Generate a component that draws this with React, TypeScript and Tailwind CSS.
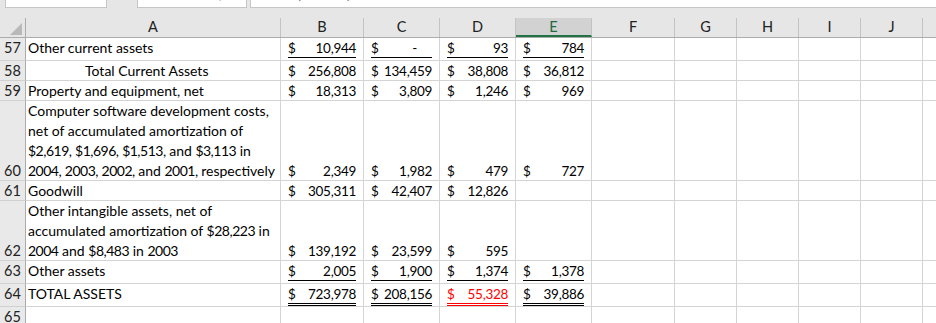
type Line = 'none' | 'single' | 'double'

type Row = {
  n: number
  h: string
  pt: string
  label: string[]
  labelPad?: string
  vals: string[]
  line: Line
  redCol?: number
}

const cols = [
  { l: 'A', w: 'w-[255px]' },
  { l: 'B', w: 'w-[83px]' },
  { l: 'C', w: 'w-[76px]' },
  { l: 'D', w: 'w-[76px]' },
  { l: 'E', w: 'w-[76px]' },
  { l: 'F', w: 'w-[83px]' },
  { l: 'G', w: 'w-[62px]' },
  { l: 'H', w: 'w-[62px]' },
  { l: 'I', w: 'w-[62px]' },
  { l: 'J', w: 'w-[62px]' },
]

const rows: Row[] = [
  { n: 57, h: 'h-[23px]', pt: '', label: ['Other current assets'], vals: ['10,944', '-', '93', '784'], line: 'single' },
  { n: 58, h: 'h-[20px]', pt: '', label: ['Total Current Assets'], labelPad: 'pl-[59px]', vals: ['256,808', '134,459', '38,808', '36,812'], line: 'none' },
  { n: 59, h: 'h-[20px]', pt: '', label: ['Property and equipment, net'], vals: ['18,313', '3,809', '1,246', '969'], line: 'none' },
  {
    n: 60,
    h: 'h-[80px]',
    pt: 'pt-[60px]',
    label: [
      'Computer software development costs,',
      'net of accumulated amortization of',
      '$2,619, $1,696, $1,513, and $3,113 in',
      '2004, 2003, 2002, and 2001, respectively',
    ],
    vals: ['2,349', '1,982', '479', '727'],
    line: 'none',
  },
  { n: 61, h: 'h-[20px]', pt: '', label: ['Goodwill'], vals: ['305,311', '42,407', '12,826', ''], line: 'none' },
  {
    n: 62,
    h: 'h-[60px]',
    pt: 'pt-[40px]',
    label: ['Other intangible assets, net of', 'accumulated amortization of $28,223 in', '2004 and $8,483 in 2003'],
    vals: ['139,192', '23,599', '595', ''],
    line: 'none',
  },
  { n: 63, h: 'h-[23px]', pt: '', label: ['Other assets'], vals: ['2,005', '1,900', '1,374', '1,378'], line: 'single' },
  { n: 64, h: 'h-[23px]', pt: '', label: ['TOTAL ASSETS'], vals: ['723,978', '208,156', '55,328', '39,886'], line: 'double', redCol: 2 },
]

// Calibri has narrow figures; squeeze digit runs so wrapped lines keep their width
function Label({ text }: { text: string }) {
  const parts = text.split(/([$0-9,]+)/)
  return (
    <>
      {parts.map((p, i) =>
        /[0-9]/.test(p) ? (
          <span key={i} className="tracking-[-0.5px]">
            {p}
          </span>
        ) : (
          <span key={i}>{p}</span>
        ),
      )}
    </>
  )
}

function Money({ v, w, pt, line, red }: { v: string; w: string; pt: string; line: Line; red: boolean }) {
  const bar = red ? 'bg-[#ff0000]' : 'bg-black'
  return (
    <div className={`${w} ${pt} shrink-0 border-r border-b border-[#d4d4d4] px-[7px] ${red ? 'text-[#ff0000]' : 'text-black'}`}>
      {v && (
        <>
          <div className="flex h-[19px] justify-between text-[13.5px] leading-[20px] tracking-[-0.3px]">
            <span>$</span>
            <span className={v === '-' ? 'pr-[15px]' : ''}>{v}</span>
          </div>
          {line !== 'none' && <div className={`h-px ${bar}`} />}
          {line === 'double' && <div className={`mt-px h-px ${bar}`} />}
        </>
      )}
    </div>
  )
}

function Blank({ w }: { w: string }) {
  return <div className={`${w} shrink-0 border-r border-b border-[#d4d4d4]`} />
}

export default function App() {
  return (
    <div className="flex h-[323px] w-[936px] flex-col overflow-hidden bg-[#e6e6e6] font-['Lato','Open_Sans',sans-serif] text-[14.5px] text-black">
      {/* formula bar remains */}
      <div className="flex h-[18px] shrink-0 items-start">
        <div className="ml-[5px] h-[8px] w-[102px] border-x border-b border-[#c6c6c6] bg-white" />
        <div className="ml-[30px] flex h-[8px] w-[110px] overflow-hidden border-x border-b border-[#c6c6c6] bg-white text-[#777]">
          <span className="-mt-[17px] ml-[50px] leading-[20px]">_</span>
          <span className="-mt-[16px] ml-[24px] leading-[20px]">,</span>
        </div>
        <div className="ml-[3px] flex h-[8px] flex-1 overflow-hidden border-b border-l border-[#c6c6c6] bg-white text-[#777]">
          <span className="-mt-[16px] ml-[46px] leading-[20px]">(</span>
          <span className="-mt-[16px] ml-[46px] leading-[20px]">)</span>
        </div>
      </div>

      {/* column headings */}
      <div className="flex h-[20px] shrink-0 border-b border-[#ababab] text-[#222]">
        <div className="flex w-[26px] shrink-0 items-end justify-end border-r border-[#ababab] pr-[3px] pb-[2px]">
          <svg width="12" height="12" viewBox="0 0 12 12">
            <polygon points="12,0 12,12 0,12" fill="#b9b9b9" />
          </svg>
        </div>
        {cols.map((c) => (
          <div
            key={c.l}
            className={`${c.w} shrink-0 border-r border-[#c3c3c3] text-center leading-[18px] ${
              c.l === 'E' ? 'border-b-2 border-b-[#217346] bg-[#d2d2d2] text-[#1e6b3f]' : ''
            }`}
          >
            {c.l}
          </div>
        ))}
        <div className="flex-1" />
      </div>

      {/* rows */}
      <div className="flex flex-1 flex-col bg-white">
        {rows.map((r) => (
          <div key={r.n} className={`flex ${r.h} shrink-0`}>
            <div className={`w-[26px] ${r.pt} shrink-0 border-r border-b border-r-[#ababab] border-b-[#d0d0d0] bg-[#e9e9e9] text-center leading-[20px] text-[#222]`}>
              {r.n}
            </div>
            <div className={`w-[255px] shrink-0 border-r border-b border-[#d4d4d4] text-[14px] leading-[20px] whitespace-nowrap ${r.labelPad ?? 'pl-[2px]'}`}>
              {r.label.map((t) => (
                <div key={t} className="h-[20px]">
                  <Label text={t} />
                </div>
              ))}
            </div>
            {r.vals.map((v, i) => (
              <Money key={i} v={v} w={cols[i + 1].w} pt={r.pt} line={v ? r.line : 'none'} red={r.redCol === i} />
            ))}
            {cols.slice(5).map((c) => (
              <Blank key={c.l} w={c.w} />
            ))}
            <div className="flex-1 border-b border-[#d4d4d4]" />
          </div>
        ))}
        <div className="flex flex-1">
          <div className="w-[26px] shrink-0 border-r border-[#ababab] bg-[#e9e9e9] text-center leading-[20px] text-[#222]">65</div>
          {cols.map((c) => (
            <Blank key={c.l} w={c.w} />
          ))}
        </div>
      </div>
    </div>
  )
}
